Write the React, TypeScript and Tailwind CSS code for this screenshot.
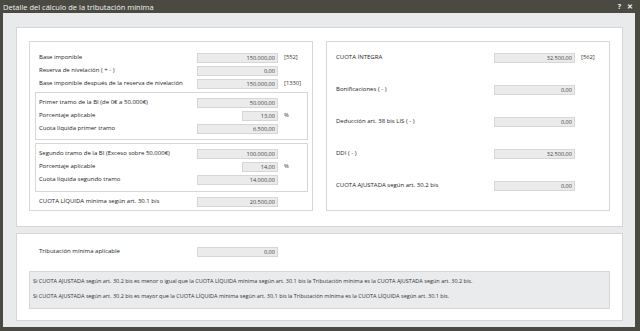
import React from 'react'

type RowProps = {
  label: string
  value: string
  narrow?: boolean
  suffix?: string
}

// one label + read-only field line, the field always starts at the same x
function Row({ label, value, narrow, suffix }: RowProps) {
  return (
    <div className="flex items-center h-[13px]">
      <div className="w-[158px] shrink-0 whitespace-nowrap text-[6px] leading-[9px] text-[#222]">{label}</div>
      <div className="w-[81px] shrink-0 flex justify-end">
        <div
          className={`${narrow ? 'w-[36px]' : 'w-[81px]'} h-[10px] bg-[#ebebeb] border border-[#d6d6d6] flex items-center justify-end pr-[2px] text-[5.6px] leading-[8px] text-[#444]`}
        >
          {value}
        </div>
      </div>
      {suffix && <div className="ml-[6px] text-[5.8px] leading-[9px] text-[#333]">{suffix}</div>}
    </div>
  )
}

export default function App() {
  return (
    <div
      className="w-[640px] h-[331px] bg-[#4b4a42] flex flex-col overflow-hidden"
      style={{ fontFamily: '"Open Sans", "Liberation Sans", sans-serif' }}
    >
      {/* Title bar */}
      <div className="h-[13px] shrink-0 flex items-center justify-between pl-[3px] pr-[7px] text-[#f2f2f2]">
        <span className="text-[7.5px] leading-[10px]">Detalle del cálculo de la tributación mínima</span>
        <div className="flex items-center gap-[6px] text-[7px] leading-[10px] font-bold">
          <span>?</span>
          <span>✕</span>
        </div>
      </div>

      {/* Body */}
      <div className="flex-1 ml-[3px] mr-[5px] mb-[4px] bg-[#e9eaeb] pl-[13px] pr-[12px] pt-[14px] pb-[6px] flex flex-col">
        {/* Top panel */}
        <div className="h-[200px] shrink-0 bg-white border border-[#d6d6d6] pl-[12px] pr-[12px] pt-[13px] flex gap-[13px]">
          {/* Left card */}
          <div className="w-[284px] h-[170px] border border-[#d7d7d7] pt-[9px] pl-[9px] flex flex-col">
            <Row label="Base imponible" value="150.000,00" suffix="[552]" />
            <Row label="Reserva de nivelación ( + - )" value="0,00" />
            <Row label="Base imponible después de la reserva de nivelación" value="150.000,00" suffix="[1330]" />

            <div className="ml-[-4px] mr-[4px] mt-[2px] border border-[#d7d7d7] pt-[3px] pb-[4px] pl-[3px]">
              <Row label="Primer tramo de la BI (de 0€ a 50.000€)" value="50.000,00" />
              <Row label="Porcentaje aplicable" value="13,00" narrow suffix="%" />
              <Row label="Cuota líquida primer tramo" value="6.500,00" />
            </div>

            <div className="ml-[-4px] mr-[4px] mt-[3px] border border-[#d7d7d7] pt-[3px] pb-[5px] pl-[3px]">
              <Row label="Segundo tramo de la BI (Exceso sobre 50.000€)" value="100.000,00" />
              <Row label="Porcentaje aplicable" value="14,00" narrow suffix="%" />
              <Row label="Cuota líquida segundo tramo" value="14.000,00" />
            </div>

            <div className="mt-[3px]">
              <Row label="CUOTA LÍQUIDA mínima según art. 30.1 bis" value="20.500,00" />
            </div>
          </div>

          {/* Right card */}
          <div className="w-[284px] h-[170px] border border-[#d7d7d7] pt-[9px] pl-[9px] flex flex-col gap-[19px]">
            <Row label="CUOTA ÍNTEGRA" value="32.500,00" suffix="[562]" />
            <Row label="Bonificaciones ( - )" value="0,00" />
            <Row label="Deducción art. 38 bis LIS ( - )" value="0,00" />
            <Row label="DDI ( - )" value="32.500,00" />
            <Row label="CUOTA AJUSTADA según art. 30.2 bis" value="0,00" />
          </div>
        </div>

        {/* Bottom panel */}
        <div className="mt-[6px] h-[88px] shrink-0 bg-white border border-[#d6d6d6] pt-[11px] flex flex-col">
          <div className="pl-[22px]">
            <Row label="Tributación mínima aplicable" value="0,00" />
          </div>
          <div className="mt-[13px] ml-[12px] w-[581px] h-[38px] bg-[#eaebec] border border-[#d6d6d6] pt-[2px] pl-[3px] text-[5.5px] leading-[9px] text-[#333]">
            <div className="h-[15px] flex items-center whitespace-nowrap">
              Si CUOTA AJUSTADA según art. 30.2 bis es menor o igual que la CUOTA LÍQUIDA mínima según art. 30.1 bis la Tributación mínima es la CUOTA AJUSTADA según art. 30.2 bis.
            </div>
            <div className="h-[15px] flex items-center whitespace-nowrap">
              Si CUOTA AJUSTADA según art. 30.2 bis es mayor que la CUOTA LÍQUIDA mínima según art. 30.1 bis la Tributación mínima es la CUOTA LÍQUIDA según art. 30.1 bis.
            </div>
          </div>
        </div>
      </div>
    </div>
  )
}
